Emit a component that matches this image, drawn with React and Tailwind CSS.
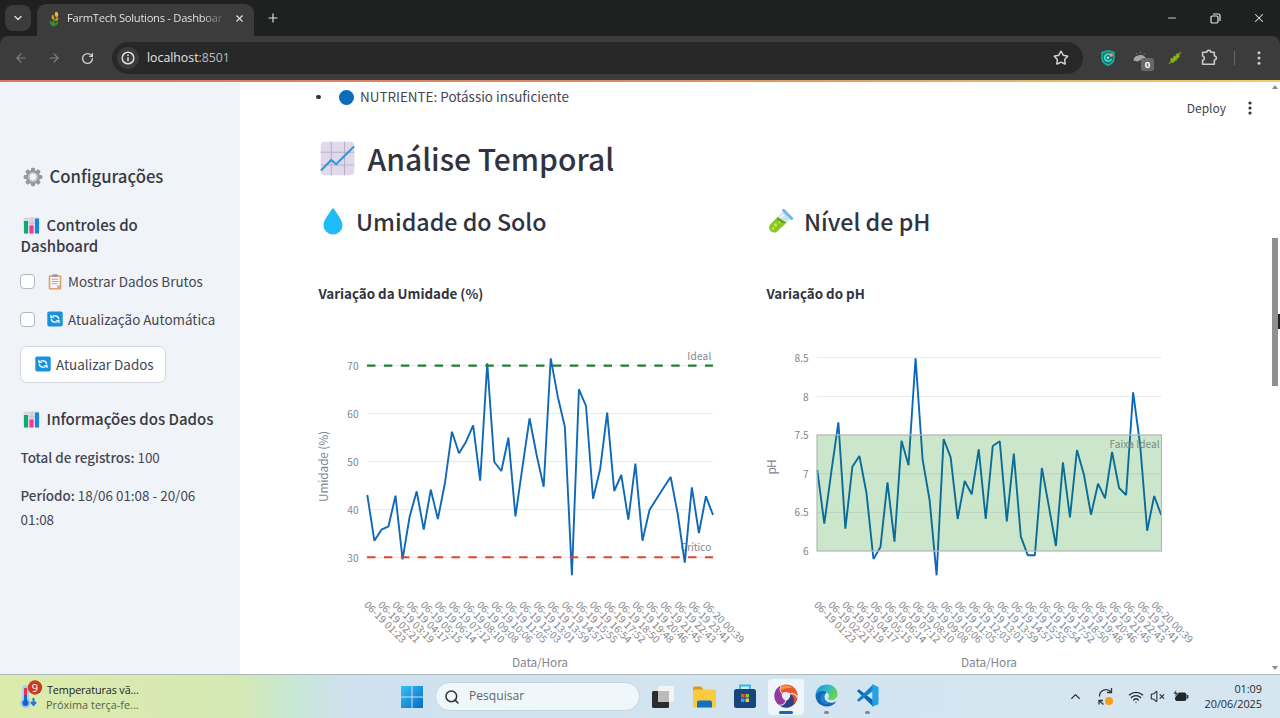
import React from "react";
import { Star, Search, ChevronDown, ChevronUp, X, Plus, Minus, ArrowLeft, ArrowRight, RotateCw, Wifi, VolumeX } from "lucide-react";

const SANS = "font-['Noto_Sans_CJK_SC','Open_Sans',sans-serif]";

const HUMIDITY = [495, 540.7, 529.7, 526.3, 495.7, 559.3, 516.7, 491.3, 529.7, 489.7, 519, 483.3, 431.7, 453.3, 441.7, 425.3, 480.7, 363.3, 462, 471, 437.7, 516.3, 466.7, 418.3, 455, 486.7, 358.3, 396.7, 426.7, 575.3, 389.3, 406, 498.7, 469.3, 412.7, 491, 475, 519.7, 463.7, 540.7, 510, 498.7, 487.7, 477, 514, 562.7, 487.3, 533, 496.3, 515];
const PH = [470, 523.7, 471.7, 422.3, 528.7, 466.7, 456, 492.7, 559, 547, 482.3, 541.7, 440.7, 465.3, 358.3, 459.3, 500, 575.3, 439, 457.3, 519, 481, 494.3, 449.3, 519, 446, 441.3, 521.3, 453.7, 536.7, 555.3, 555.3, 468, 506.7, 546, 462.3, 517.3, 450, 475, 514.7, 483.7, 498.3, 452, 488, 495, 392.3, 445, 530.7, 496, 515];
const TIMES = ["01:23", "02:21", "03:19", "04:17", "05:15", "06:14", "07:12", "08:10", "09:08", "10:06", "11:05", "12:03", "13:01", "13:59", "14:57", "15:55", "16:54", "17:52", "18:50", "19:48", "20:46", "21:45", "22:43", "23:41", "00:39"];

const toPath = (ys, x0, x1) => ys.map((y, i) => `${(x0 + (i * (x1 - x0)) / (ys.length - 1)).toFixed(2)},${y}`).join(" ");

function TimeAxis({ x, step, titleX }) {
  return (
    <g fill="#83868f">
      {TIMES.map((t, i) => (
        <text key={t} transform={`translate(${x + i * step} 605.5) rotate(45)`} fontSize="10.1" textLength="54" lengthAdjust="spacingAndGlyphs">
          {(i === 24 ? "06-20 " : "06-19 ") + t}
        </text>
      ))}
      <text x={titleX} y="666.5" fontSize="11.8" textAnchor="middle" textLength="56">Data/Hora</text>
    </g>
  );
}

function HumidityChart() {
  return (
    <svg width="448" height="364" viewBox="318 310 448 364" className="block overflow-visible">
      {[[365.5, 70], [413.5, 60], [461.5, 50], [509.5, 40], [557.5, 30]].map(([y, v]) => (
        <g key={v}>
          <path d={`M367 ${y}H713`} stroke="#e9eaee" />
          <text x="358.700" y={y + 4} fontSize="10.1" textAnchor="end" textLength="11.5" fill="#83868f">{v}</text>
        </g>
      ))}
      <text transform="translate(328 466.5) rotate(-90)" textAnchor="middle" fontSize="11.8" textLength="71" fill="#83868f">Umidade (%)</text>
      <text x="711.300" y="360" fontSize="10.1" textAnchor="end" textLength="24" fill="#83868f">Ideal</text>
      <text x="711.300" y="551.2" fontSize="10.1" textAnchor="end" textLength="30.5" fill="#83868f">Crítico</text>
      <polyline points={toPath(HUMIDITY, 367.3, 713)} fill="none" stroke="#0f68b8" strokeWidth="1.9" strokeLinejoin="bevel" />
      <path d="M367 365.6H713" stroke="#1f8033" strokeWidth="2.1" strokeDasharray="8.45 8.45" />
      <path d="M367 557.3H713" stroke="#e6402f" strokeWidth="2.1" strokeDasharray="8.45 8.45" />
      <TimeAxis x={363.5} step={14.1} titleX={540} />
    </svg>
  );
}

function PhChart() {
  return (
    <svg width="448" height="364" viewBox="766 310 448 364" className="block overflow-visible">
      {[[357.5, "8.5"], [396.5, "8"], [435, "7.5"], [473.7, "7"], [512.4, "6.5"], [551, "6"]].map(([y, v]) => (
        <g key={v}>
          <path d={`M817 ${y}H1161.5`} stroke="#e9eaee" />
          <text x="808.700" y={y + 4} fontSize="10.1" textAnchor="end" textLength={v.length > 1 ? 14.3 : 5.5} fill="#83868f">{v}</text>
        </g>
      ))}
      <text transform="translate(776 467) rotate(-90)" textAnchor="middle" fontSize="11.8" textLength="15" fill="#83868f">pH</text>
      <polyline points={toPath(PH, 817.3, 1161.2)} fill="none" stroke="#0d68bd" strokeWidth="1.9" strokeLinejoin="bevel" />
      <rect x="817" y="435" width="344.5" height="116" fill="#008000" fillOpacity="0.2" />
      <rect x="817" y="435" width="344.5" height="116" fill="none" stroke="#b5bcb6" strokeWidth="1.2" />
      <text x="1159.5" y="448" fontSize="10.1" textAnchor="end" textLength="50" fill="#7c8c80">Faixa Ideal</text>
      <TimeAxis x={813.5} step={14.05} titleX={989} />
    </svg>
  );
}

const BarsIcon = () => (
  <svg width="17" height="17" viewBox="0 0 17 17" className="shrink-0">
    <rect x="0.5" y="0.5" width="16" height="16" rx="2" fill="#dcd8e8" />
    <path d="M.5 6H16.5M.5 11H16.5M9 .5V16" stroke="#bdb8cc" strokeWidth=".7" />
    <rect x="1" y="4" width="4" height="12.5" fill="#0dab6c" />
    <rect x="6.5" y="8.5" width="4" height="8" fill="#ec3a92" />
    <rect x="12" y="1.5" width="4" height="15" fill="#1687dc" />
  </svg>
);

const GearIcon = () => (
  <svg width="20" height="20" viewBox="0 0 20 20" className="shrink-0">
    <g fill="#9895a1">
      {[0, 45, 90, 135].map((a) => (
        <rect key={a} x="8" y="0.7" width="4" height="18.6" rx="1.2" transform={`rotate(${a} 10 10)`} />
      ))}
      <circle cx="10" cy="10" r="7" />
    </g>
    <circle cx="10" cy="10" r="4.3" fill="#f1f4f8" stroke="#bbb8c6" strokeWidth="1.8" />
  </svg>
);

const ReloadIcon = () => (
  <svg width="16" height="16" viewBox="0 0 16 16" className="shrink-0">
    <rect x=".3" y=".5" width="15.4" height="15" rx="1.8" fill="#1594dc" />
    <g fill="none" stroke="#fff" strokeWidth="1.4">
      <path d="M11.6 8.3c.2-2.3-1.6-3.6-3.5-3.4H5.8" />
      <path d="M4.4 7.7c-.2 2.3 1.6 3.6 3.5 3.4h2.3" />
    </g>
    <path d="M3.4 3.4V7.1H7.2zM12.6 12.6V8.9H8.8z" fill="#fff" />
  </svg>
);

const ClipboardIcon = () => (
  <svg width="14" height="16" viewBox="0 0 14 16" className="shrink-0">
    <rect x=".7" y="1.2" width="12.6" height="14.3" rx="1.3" fill="#e0a266" />
    <path d="M2.3 2.8H11.7V11.5L9.2 14H2.3z" fill="#f8f4fa" />
    <path d="M11.7 11.3H9V14z" fill="#b8b0c4" />
    <rect x="4.3" y=".2" width="5.4" height="2.8" rx=".8" fill="#9c97a6" />
    <path d="M3.8 5.3H10.2M3.8 7.5H10.2M3.8 9.7H9" stroke="#9d98a8" strokeWidth=".8" />
  </svg>
);

const TrendIcon = () => (
  <svg width="35" height="35" viewBox="0 0 35 35" className="shrink-0">
    <rect x=".7" y=".7" width="33.6" height="33.6" rx="4" fill="#e0d9ec" />
    <path d="M11.3 .7V34.3M24.5 .7V34.3M.7 11.2H34.3M.7 24H34.3" stroke="#b9b1c5" strokeWidth="1.1" />
    <path d="M1 29.5L11.2 19L16.2 23.2L34 5.5" stroke="#3298dc" strokeWidth="2.1" fill="none" />
  </svg>
);

const DropIcon = () => (
  <svg width="20" height="27" viewBox="0 0 20 27" className="shrink-0">
    <path d="M10 .6C10.8.6 11.3 1.2 11.8 2C15 7.5 19.5 12.4 19.5 17.2A9.5 9.2 0 0 1 .5 17.2C.5 12.4 5 7.5 8.2 2C8.7 1.2 9.2 .6 10 .6z" fill="#1fbbf6" />
  </svg>
);

const TubeIcon = () => (
  <svg width="26" height="26" viewBox="0 0 26 26" className="shrink-0">
    <path d="M15.500 3L23 10.500 9.300 23.300C5 27-1.500 21 2.300 16.600z" fill="#cfe2f1" />
    <path d="M9.500 9.300L18.500 14.700 9.300 23.300C5 27-1.500 21 2.300 16.600z" fill="#84c820" />
    <path d="M9.500 9.300L18.500 14.700 14.500 15 8.500 11z" fill="#62a516" />
    <path d="M15.500 2.300L23.700 10.500" stroke="#6fb9e6" strokeWidth="3" strokeLinecap="round" />
    <path d="M12.800 9.500L16 6.300" stroke="#fff" strokeWidth="1.500" />
    <circle cx="7.500" cy="17" r="1.700" fill="#c3e85a" />
    <circle cx="5" cy="20.500" r="1.200" fill="#c3e85a" />
    <circle cx="11.500" cy="14.500" r="1" fill="#c3e85a" />
  </svg>
);

function BrowserChrome() {
  return (
    <header className="h-20 shrink-0 bg-[#1e2120] font-['Open_Sans',sans-serif] text-[#e3e3e3]">
      <div className="flex h-9 items-end">
        <div className="mb-[5px] ml-[5px] grid h-[26px] w-[26px] place-items-center rounded-lg bg-[#3b3c3b]">
          <ChevronDown size={12} strokeWidth={2.6} />
        </div>
        <div className="ml-[6px] flex h-8 w-[217px] items-center rounded-t-[9px] bg-[#3c3c3c] pb-[3px] pl-[12px]">
          <svg width="11" height="16" viewBox="0 0 11 16">
            <path d="M5 15.500C4 12 4.500 10 5.500 7" stroke="#3c8d2c" strokeWidth="1.800" fill="none" />
            <path d="M5 15C1.500 15 .5 12 .6 9.500 3 10 4.800 12 5 15zM5.300 15C8.500 14.500 9.500 12.500 9.200 10.300 7 11 5.500 12.500 5.300 15z" fill="#35912a" />
            <path d="M7 .5C10 2 10 4.500 7.600 6.500 5.300 5 5 2.500 7 .5z" fill="#e8b23c" />
            <path d="M3.500 3.500C5.500 5 5.800 7 4.300 9 2 7.500 2 5.500 3.500 3.500z" fill="#d59a2b" />
            <path d="M8.500 6C10 7.500 9.500 10 6.500 10.500 5.500 8.500 6.500 6.500 8.500 6z" fill="#c98a25" />
          </svg>
          <span className="ml-[7px] w-[157px] whitespace-nowrap bg-gradient-to-r from-[#f0f0f0] from-86% to-[#4c4c4c] bg-clip-text text-[11.2px] font-medium tracking-[-0.28px] text-transparent">
            FarmTech Solutions - Dashboar
          </span>
          <X size={11} strokeWidth={2.400} className="ml-[10px]" />
        </div>
        <Plus size={14} strokeWidth={2} className="mb-[11px] ml-[12px]" />
        <div className="mb-[11px] ml-auto flex items-center pr-[14px]">
          <Minus size={12} strokeWidth={1.800} />
          <svg width="11" height="11" viewBox="0 0 11 11" className="ml-[32px]" fill="none" stroke="currentColor" strokeWidth="1.200">
            <rect x="1" y="3" width="7" height="7" rx="1.200" />
            <path d="M3 1H8.500Q10 1 10 2.500V8" />
          </svg>
          <X size={14} strokeWidth={1.800} className="ml-[31px]" />
        </div>
      </div>
      <div className="flex h-11 items-center rounded-t-lg bg-[#3c3c3c]">
        <ArrowLeft size={14} strokeWidth={2} className="ml-[14px] text-[#828282]" />
        <ArrowRight size={14} strokeWidth={2} className="ml-[19px] text-[#828282]" />
        <RotateCw size={13} strokeWidth={2.500} className="ml-[20px] text-[#d0d0d0]" />
        <div className="ml-[18px] flex h-8 w-[971px] items-center rounded-full bg-[#282828] pl-[5px]">
          <div className="grid h-[22px] w-[22px] place-items-center rounded-full bg-[#3c3c3c]">
            <svg width="14" height="14" viewBox="0 0 14 14" fill="none" stroke="#dedede">
              <circle cx="7" cy="7" r="5.800" strokeWidth="1.500" />
              <path d="M7 6.200V10.200M7 3.600V5" strokeWidth="1.500" />
            </svg>
          </div>
          <span className="ml-[8px] text-[12.300px] leading-none text-[#e6e6e6]">localhost<span className="text-[#bcbcbc]">:8501</span></span>
          <Star size={16} strokeWidth={2.200} className="ml-auto mr-[14px] text-[#d4d4d4]" />
        </div>
        <svg width="14" height="16" viewBox="0 0 14 16" className="ml-[17.500px]">
          <path d="M7 .7L13 2.600V8C13 12 10 14.300 7 15.400 4 14.300 1 12 1 8V2.600z" fill="#14796f" stroke="#1bb7a6" strokeWidth="1.300" />
          <path d="M9.800 5.300A3.500 3.500 0 1 0 10.300 9" stroke="#47dfe0" strokeWidth="1.600" fill="none" />
          <circle cx="10.300" cy="5" r="1.700" fill="#ef9a85" />
          <circle cx="7" cy="7.600" r="1.200" fill="#e7fbfa" />
        </svg>
        <svg width="22" height="21" viewBox="0 0 22 21" className="ml-[18.500px] mt-[6px]">
          <path d="M.500 9.500A6.500 5.500 0 0 1 13 7.500L10 11 8.500 8.500 4.500 10.500z" fill="#a5a5a5" />
          <path d="M3 2L4 3.300M7.500 .5V2M12 2L11 3.300" stroke="#777" />
          <rect x="8" y="7" width="13" height="13" rx="2.500" fill="#686868" />
          <text x="14.500" y="17" textAnchor="middle" fontSize="9.500" fontWeight="700" fill="#fff">0</text>
        </svg>
        <svg width="14" height="14" viewBox="0 0 14 14" className="ml-[12.500px]">
          <path d="M.8 13.200L3 11M11 3L13.200 .8" stroke="#6f9a18" strokeWidth="1.200" />
          <path d="M3 7.500L5.300 7.600 5.800 5.500 8 5.300 8.600 3 11.100 2.900 11 6.400 8.900 6.800 8.700 9 6.600 9.500 5.800 11.200 2.900 11.100z" fill="#8db61c" stroke="#7fa81a" />
        </svg>
        <svg width="17" height="17" viewBox="0 0 17 17" fill="none" stroke="#c9c9c9" strokeWidth="1.600" className="mb-px ml-[19.500px]">
          <path d="M1.600 3.200H5.800A2 1.800 0 0 1 9.800 3.200H13.300V7A2 2 0 0 1 13.300 11V15.200H1.600V11.300A2.200 2.200 0 0 0 1.600 7z" strokeLinejoin="round" />
        </svg>
        <div className="ml-[15.500px] h-[14px] w-px bg-[#666]" />
        <svg width="4" height="16" viewBox="0 0 4 16" fill="#c9c9c9" className="ml-[22.500px]">
          <circle cx="2" cy="2.800" r="1.500" /><circle cx="2" cy="8" r="1.500" /><circle cx="2" cy="13.200" r="1.500" />
        </svg>
      </div>
    </header>
  );
}

const Box = () => <span className="h-[15px] w-[15px] shrink-0 rounded-[4px] border border-[#b3b6bd] bg-white" />;

function Sidebar() {
  return (
    <aside className="w-60 shrink-0 bg-[#f0f3f8] pl-5 text-[13.450px] text-[#454750]">
      <h2 className="mt-[83px] flex h-6 items-center whitespace-nowrap pl-[2.500px] text-[16.700px] font-medium text-[#373942]">
        <GearIcon /><span className="ml-[7px]">Configurações</span>
      </h2>
      <h3 className="mt-[26px] h-[41px] text-[14.950px] font-medium leading-[20.500px] text-[#373942]">
        <span className="flex items-center pl-[2.500px]"><BarsIcon /><span className="ml-[7px]">Controles do</span></span>
        <span className="block pl-[0.500px]">Dashboard</span>
      </h3>
      <div className="mt-[15.500px] flex h-5 items-center">
        <Box /><span className="ml-[13px]"><ClipboardIcon /></span><span className="ml-[6px] whitespace-nowrap">Mostrar Dados Brutos</span>
      </div>
      <div className="mt-[17.500px] flex h-5 items-center">
        <Box /><span className="ml-[12px]"><ReloadIcon /></span><span className="ml-[5px] whitespace-nowrap">Atualização Automática</span>
      </div>
      <button className="mt-[17px] flex h-[37px] w-[146px] items-center rounded-[7px] border border-[#d5d8de] bg-white pb-px pl-[14px]">
        <ReloadIcon /><span className="ml-[5px] whitespace-nowrap">Atualizar Dados</span>
      </button>
      <h3 className="mt-[26px] flex h-5 items-center pl-[2.500px] text-[15px] font-medium text-[#373942]">
        <BarsIcon /><span className="ml-[7px] whitespace-nowrap">Informações dos Dados</span>
      </h3>
      <p className="mt-[15.500px] h-6 pl-[0.500px] leading-6"><b className="font-medium">Total de registros:</b> 100</p>
      <p className="mt-[14px] pl-[0.500px] leading-6"><b className="font-medium">Período:</b> 18/06 01:08 - 20/06<br />01:08</p>
    </aside>
  );
}

function Column({ icon, title, subtitle, children }) {
  return (
    <section className="w-[448px]">
      <h3 className="flex h-8 items-center whitespace-nowrap text-[23.250px] font-medium">{icon}<span>{title}</span></h3>
      <h4 className="mt-[47px] h-[20px] whitespace-nowrap pl-[0.500px] text-[13.350px] font-bold leading-5">{subtitle}</h4>
      <div className="mt-[6px] h-[364px]">{children}</div>
    </section>
  );
}

function Main() {
  return (
    <main className="relative flex-1 overflow-hidden bg-white pl-[78px] text-[#31333f]">
      <div className="flex h-[30px] items-center text-[13.450px] text-[#454750]">
        <span className="ml-[-2px] h-[4.500px] w-[4.500px] rounded-full bg-[#31333f]" />
        <span className="ml-[18.500px] h-[15px] w-[15px] rounded-full bg-[#0a6cba]" />
        <span className="mb-px ml-[6px] whitespace-nowrap">NUTRIENTE: Potássio insuficiente</span>
      </div>
      <h2 className="mt-[24px] flex h-[44px] items-center pl-[2px] text-[30px] font-medium">
        <TrendIcon /><span className="ml-[12.500px] whitespace-nowrap">Análise Temporal</span>
      </h2>
      <div className="mt-[25px] flex">
        <Column title="Umidade do Solo" subtitle="Variação da Umidade (%)" icon={<span className="ml-[5px] mr-[13px]"><DropIcon /></span>}>
          <HumidityChart />
        </Column>
        <Column title="Nível de pH" subtitle="Variação do pH" icon={<span className="ml-[1.500px] mr-[10.500px]"><TubeIcon /></span>}>
          <PhChart />
        </Column>
      </div>
      <div className="absolute right-[28px] top-[16px] flex items-center text-[12px] leading-5 text-[#41434e]">
        Deploy
        <svg width="4" height="14" viewBox="0 0 4 14" fill="#31333f" className="ml-[22px]">
          <circle cx="2" cy="2" r="1.600" /><circle cx="2" cy="7" r="1.600" /><circle cx="2" cy="12" r="1.600" />
        </svg>
      </div>
      <div className="absolute right-0 top-0 flex h-full w-[9px] flex-col items-center bg-white pr-px">
        <svg width="6" height="4" viewBox="0 0 6 4" className="mt-[3px]"><path d="M0 4L3 0L6 4z" fill="#8b8b8b" /></svg>
        <div className="mt-[149px] h-[148px] w-[6px] bg-[#909090]" />
        <svg width="6" height="4" viewBox="0 0 6 4" className="mb-[4px] mt-auto"><path d="M0 0L3 4L6 0z" fill="#8b8b8b" /></svg>
      </div>
      <div className="absolute right-0 top-[232px] h-[15px] w-[2px] bg-[#222]" />
    </main>
  );
}

const BLADE = "M8 1.200C15-1.500 22.500 3 23.500 10 24 14 22.500 17.500 19.500 20 21 15 18.500 9.500 13.500 8.300 11.500 7.800 9.500 8.200 8.200 9.500 5.500 7.500 5.500 3.500 8 1.200z";

function Taskbar() {
  return (
    <footer className="flex h-11 shrink-0 items-center border-t border-[#aebabb] bg-[linear-gradient(90deg,#dcebab_0px,#d5e9b5_240px,#c5e7d5_295px,#cfe1ee_345px,#d2e4f0_700px,#d6e6f1_1280px)] font-['Open_Sans',sans-serif] text-[#1c1c1c]">
      <svg width="25" height="32" viewBox="0 0 25 32" className="ml-[20px] mb-[4px]">
        <rect x="2" y="6" width="7" height="21" rx="3.500" fill="#acd0f5" />
        <circle cx="5.500" cy="24" r="5" fill="#98c5f3" />
        <path d="M5.500 9V22" stroke="#d83b4c" strokeWidth="3" /><path d="M5.500 16V23" stroke="#1767cf" strokeWidth="3" />
        <circle cx="5.500" cy="24" r="3" fill="#1262ce" />
        <path d="M13.500 19V25M11 23L13.500 26L16 23" stroke="#2577c9" strokeWidth="2" fill="none" />
        <circle cx="15" cy="8.500" r="7.200" fill="#c73d20" />
        <text x="15" y="12.500" textAnchor="middle" fill="#fff" fontSize="11">9</text>
      </svg>
      <div className="ml-[2px] w-[98px] whitespace-nowrap text-[10.800px] leading-[15px] tracking-[-0.120px]">
        <div>Temperaturas vã...</div>
        <div className="ml-[-1px] tracking-[0.050px] text-[#55614b]">Próxima terça-fe...</div>
      </div>
      <svg width="22" height="22" viewBox="0 0 22 22" className="ml-[256px]">
        <defs><linearGradient id="win" x1="0" y1="0" x2="1" y2="1"><stop stopColor="#35c3f3" /><stop offset="1" stopColor="#0669c7" /></linearGradient></defs>
        <path d="M0 0H10.500V10.500H0zM11.500 0H22V10.500H11.500zM0 11.500H10.500V22H0zM11.500 11.500H22V22H11.500z" fill="url(#win)" />
      </svg>
      <div className="ml-[12px] flex h-[29px] w-[205px] items-center rounded-full border border-[#c5d5dd] bg-[#f0f7fa] pl-[8px]">
        <Search size={16} strokeWidth={2.300} className="text-[#333]" />
        <span className="ml-[9px] text-[12.100px] text-[#5f666b]">Pesquisar</span>
      </div>
      <svg width="22" height="22" viewBox="0 0 22 22" className="ml-[11.500px]">
        <rect x="6" y="0" width="16" height="16" rx="1.500" fill="#f3f4f4" />
        <rect x="0" y="5" width="17" height="17" rx="1.500" fill="#2c2c2c" />
        <path d="M6 5H17V16H6z" fill="#bbb" />
      </svg>
      <svg width="24" height="22" viewBox="0 0 24 22" className="ml-[19px]">
        <path d="M0 2Q0 .5 1.500 .5H8L10.500 3.500V8H0z" fill="#d89a20" />
        <rect x="0" y="3.500" width="23" height="18" rx="1.500" fill="#fbcb3f" />
        <path d="M4 21.500V16.500Q4 14.500 6 14.500H17Q19 14.500 19 16.500V21.500z" fill="#1472bd" />
      </svg>
      <svg width="22" height="24" viewBox="0 0 22 24" className="ml-[17px] mb-[2px]">
        <path d="M6 6V1.500H16V6" stroke="#35b8e6" strokeWidth="1.800" fill="none" />
        <rect x="0" y="5" width="22" height="19" rx="2.500" fill="#17467c" />
        <path d="M7 10H10.500V13.500H7z" fill="#f15522" /><path d="M11.500 10H15V13.500H11.500z" fill="#8cc53e" />
        <path d="M7 14.500H10.500V18H7z" fill="#2ba8e5" /><path d="M11.500 14.500H15V18H11.500z" fill="#ffc42b" />
      </svg>
      <div className="ml-[12.500px] flex h-[36px] w-[36px] flex-col items-center justify-end rounded-[4px] bg-[#eff5f9] pb-px">
        <svg width="24" height="24" viewBox="0 0 24 24" className="mb-[3px]">
          <circle cx="12" cy="12" r="6" fill="#f1edf6" />
          <path d={BLADE} fill="#2b4285" transform="rotate(120 12 12)" />
          <path d={BLADE} fill="#923aa0" transform="rotate(240 12 12)" />
          <path d={BLADE} fill="#e5572d" />
          <path d="M8.500 1.500C12.500 .5 17 2 19 4.500 14 3.500 9.500 4.500 7 6.500 7 4.500 7.500 2.500 8.500 1.500z" fill="#f7933a" />
          <g fill="none" stroke="#f1edf6" strokeWidth="1">
            <path d="M8 1.200C5.500 3.500 5.500 7.500 8.200 9.500" />
            <path d="M8 1.200C5.500 3.500 5.500 7.500 8.200 9.500" transform="rotate(120 12 12)" />
            <path d="M8 1.200C5.500 3.500 5.500 7.500 8.200 9.500" transform="rotate(240 12 12)" />
          </g>
        </svg>
        <span className="h-[3px] w-[14px] rounded-full bg-[#1167b8]" />
      </div>
      <div className="ml-[11px] flex h-[36px] flex-col items-center justify-end pb-px">
        <svg width="23" height="23" viewBox="0 0 23 23" className="mb-[4px]">
          <defs>
            <linearGradient id="edge" x1="0" y1="0" x2="1" y2=".5"><stop stopColor="#1b8ed8" /><stop offset=".5" stopColor="#2bb7ce" /><stop offset="1" stopColor="#67d551" /></linearGradient>
          </defs>
          <path d="M.5 11C1 4.500 6 .5 12 .5 18.500 .5 22.500 5 22.500 10 22.500 14 19.500 16 16.500 16 13.500 16 12.500 15 13.500 13.500 16 9 9 5 .5 11z" fill="url(#edge)" />
          <path d="M.5 11C4 6 10 6.500 11.500 8.500 7.500 11.500 9 18 15 18.800 18 19 20 18 21.300 17.200 19 21 15.500 22.500 12 22.500 5 22.500 .5 17.500 .5 11z" fill="#1267b8" />
          <path d="M11.500 8.500C7.500 11.500 9 18 15 18.800 11 21.500 5 19.500 5.500 14 5.700 11 8.500 8.800 11.500 8.500z" fill="#1b85cf" />
        </svg>
        <span className="h-[3px] w-[5px] rounded-full bg-[#808b93]" />
      </div>
      <div className="ml-[18px] flex h-[36px] flex-col items-center justify-end pb-px">
        <svg width="23" height="23" viewBox="0 0 24 24" className="mb-[4px]">
          <path d="M1 7.200L3 5.400 18 17V23.800z" fill="#0c68ae" />
          <path d="M1 16.800L3 18.600 18 7V.2z" fill="#1382cd" />
          <path d="M17 .3L23.500 3V21L17 23.700z" fill="#25a0e8" />
        </svg>
        <span className="h-[3px] w-[5px] rounded-full bg-[#808b93]" />
      </div>
      <div className="ml-auto flex items-center text-[#252b30]">
        <ChevronUp size={15} strokeWidth={2.200} />
        <svg width="18" height="20" viewBox="0 0 18 20" className="ml-[14px]" fill="none" stroke="#30363a" strokeWidth="1.300">
          <path d="M2.500 9.500A6.500 6.500 0 0 1 14 5M14.500 1V5.500H10M2 17.500V13.500H6M2.500 14L6.500 17.500" />
          <circle cx="12" cy="14" r="4" fill="#f59d16" stroke="none" />
        </svg>
        <Wifi size={16} strokeWidth={2} className="ml-[13px]" />
        <VolumeX size={15} strokeWidth={1.700} className="ml-[6px]" />
        <svg width="17" height="14" viewBox="0 0 17 14" className="mb-[2px] ml-[7px]">
          <rect x="3.500" y="4" width="10.500" height="7.500" rx="1.500" fill="#20262a" stroke="#20262a" />
          <path d="M15.700 6V9.500" stroke="#20262a" strokeWidth="1.300" />
          <path d="M4.500 0L1 5H3.500L2.500 9 6.500 3.500H4z" fill="#20262a" stroke="#d6e6f1" strokeWidth=".7" />
        </svg>
        <div className="mb-px ml-[12px] mr-[18px] w-[61px] whitespace-nowrap text-right text-[10.900px] leading-[15px] tracking-[-0.030px]">
          <div>01:09</div><div>20/06/2025</div>
        </div>
      </div>
    </footer>
  );
}

export default function App() {
  return (
    <div className="flex h-[718px] w-[1280px] flex-col overflow-hidden bg-white">
      <BrowserChrome />
      <div className="h-[2px] shrink-0 bg-gradient-to-r from-[#de7564] via-[#d98d62] to-[#efcf70]" />
      <div className={`flex min-h-0 flex-1 ${SANS}`}>
        <Sidebar />
        <Main />
      </div>
      <Taskbar />
    </div>
  );
}
